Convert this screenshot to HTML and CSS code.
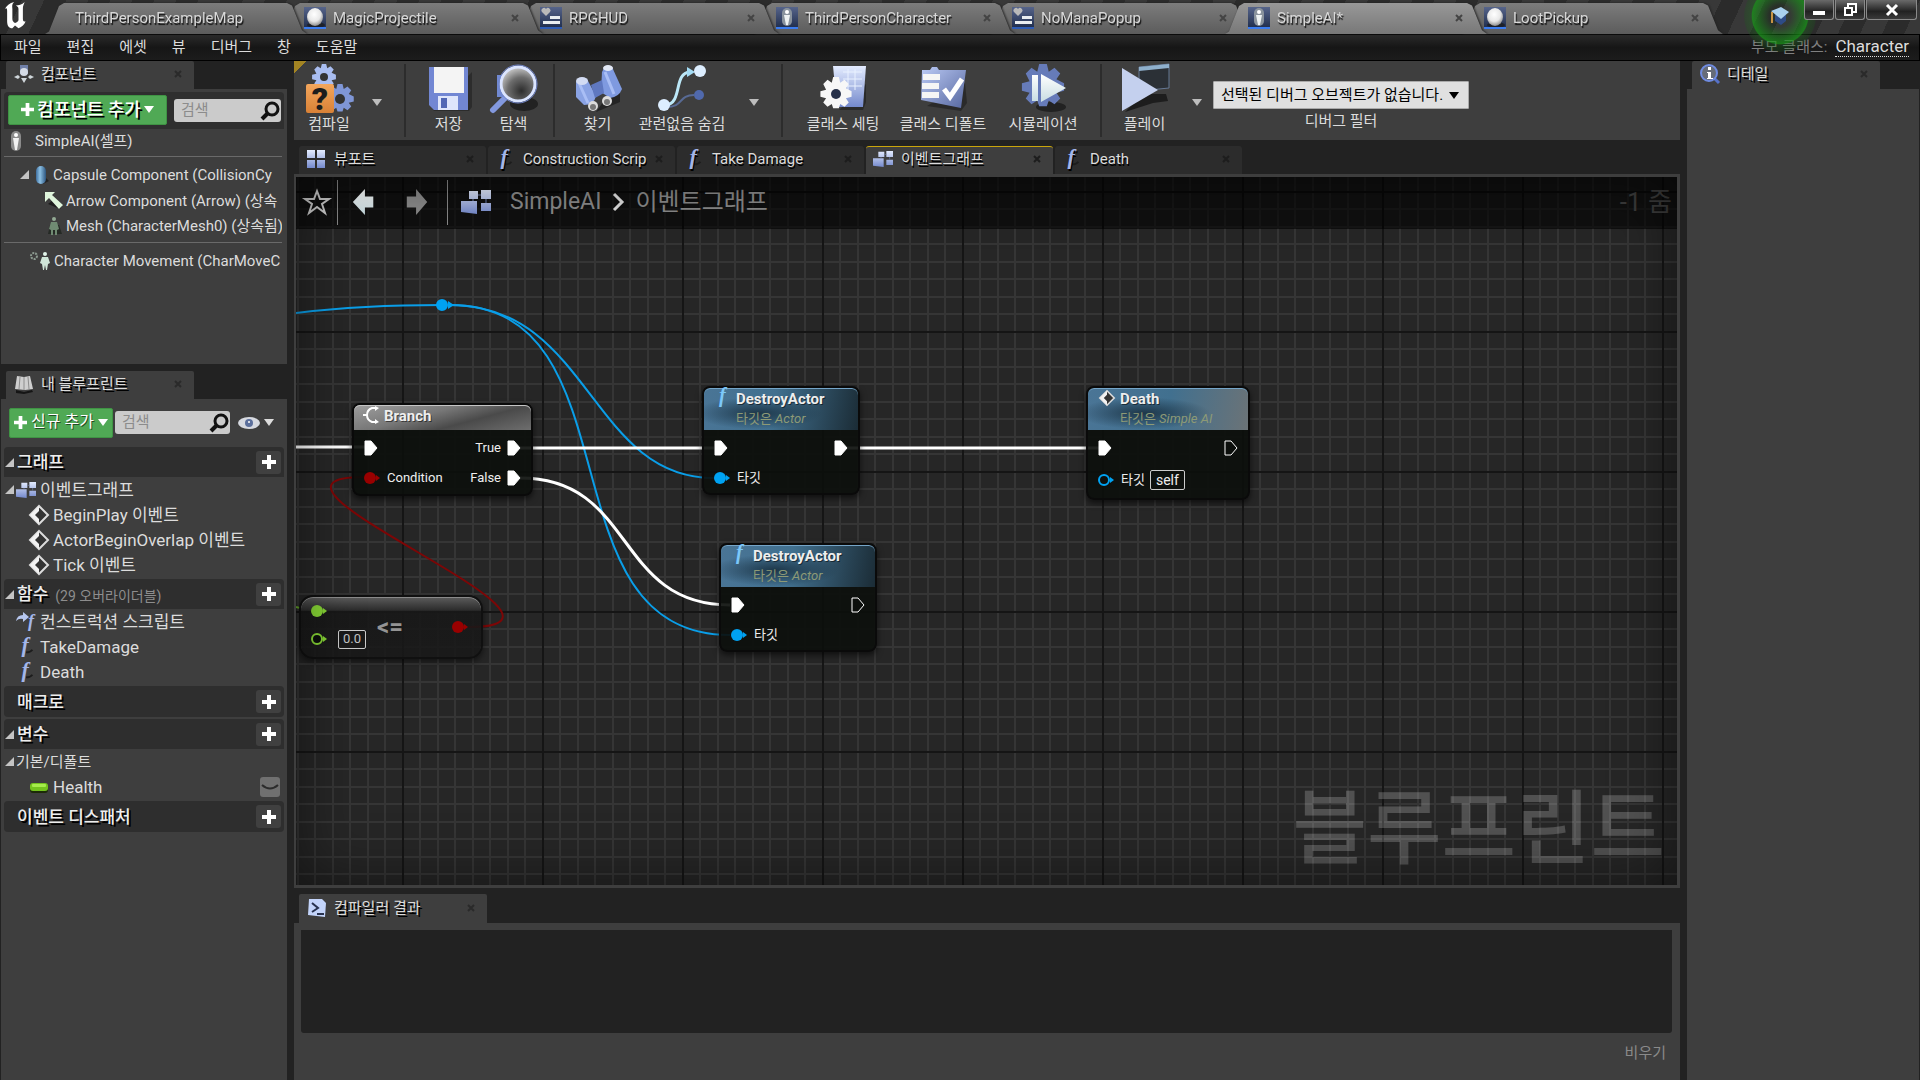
FILE: index.html
```html
<!DOCTYPE html>
<html lang="ko">
<head>
    <meta charset="UTF-8">
    <meta name="viewport" content="width=device-width, initial-scale=1.0">
    <title>SimpleAI</title>
    <link rel="stylesheet" href="styles.css">
</head>
<body>

<!-- shared icons -->
<svg class="sprite" aria-hidden="true">
    <defs>
        <linearGradient id="gBlue" x1="0" y1="0" x2="0" y2="1">
            <stop offset="0" stop-color="#e4ecff"/>
            <stop offset="1" stop-color="#7489cc"/>
        </linearGradient>
        <linearGradient id="gSteel" x1="0" y1="0" x2="1" y2="1">
            <stop offset="0" stop-color="#bccbf6"/>
            <stop offset="1" stop-color="#56679f"/>
        </linearGradient>
        <linearGradient id="gTile" x1="0" y1="0" x2="0" y2="1">
            <stop offset="0" stop-color="#56648a"/>
            <stop offset="1" stop-color="#1d2b4a"/>
        </linearGradient>
        <linearGradient id="gWhite" x1="0" y1="0" x2="0" y2="1">
            <stop offset="0" stop-color="#ffffff"/>
            <stop offset="1" stop-color="#c8dde2"/>
        </linearGradient>
        <linearGradient id="gOrange" x1="0" y1="0" x2="0" y2="1">
            <stop offset="0" stop-color="#f3a65c"/>
            <stop offset="1" stop-color="#d98136"/>
        </linearGradient>
        <linearGradient id="gCapsule" x1="0" y1="0" x2="1" y2="0">
            <stop offset="0" stop-color="#3f6f9f"/>
            <stop offset="0.4" stop-color="#8cc0e4"/>
            <stop offset="1" stop-color="#2d5680"/>
        </linearGradient>
        <radialGradient id="gSphere" cx="0.45" cy="0.35" r="0.65">
            <stop offset="0" stop-color="#ffffff"/>
            <stop offset="0.6" stop-color="#e8e8e8"/>
            <stop offset="1" stop-color="#8d8d8d"/>
        </radialGradient>
        <radialGradient id="gLens" cx="0.6" cy="0.7" r="0.8">
            <stop offset="0" stop-color="#2d2d2d"/>
            <stop offset="0.5" stop-color="#6d6d6d"/>
            <stop offset="1" stop-color="#e5e5e5"/>
        </radialGradient>
    </defs>

    <symbol id="i-sphere" viewBox="0 0 22 22">
        <rect width="22" height="22" fill="url(#gTile)"/>
        <ellipse cx="12" cy="18" rx="9" ry="3" fill="#1a1a1a" opacity="0.7"/>
        <ellipse cx="11" cy="10" rx="8" ry="9" fill="url(#gSphere)"/>
        <rect y="20" width="22" height="2" fill="#3c7df0"/>
    </symbol>
    <symbol id="i-widget" viewBox="0 0 22 22">
        <rect width="22" height="22" fill="url(#gTile)"/>
        <path d="M6 9 2 5a2 2 0 0 1 4-3 2 2 0 0 1 4 3z" fill="#b9b9b9"/>
        <path d="M10 9h10v3H10zM3 14h17v3H3z" fill="#e9edf0"/>
        <rect y="20" width="22" height="2" fill="#2e5cb4"/>
    </symbol>
    <symbol id="i-pawn" viewBox="0 0 22 22">
        <rect width="22" height="22" fill="url(#gTile)"/>
        <rect x="6" y="1" width="10" height="18" rx="5" fill="#8a939d"/>
        <circle cx="11" cy="5" r="2" fill="#fff"/>
        <path d="M8 8h6l-1 5-1 5h-2l-1-5z" fill="#eef2f2"/>
        <rect y="20" width="22" height="2" fill="#3c7df0"/>
    </symbol>
    <symbol id="i-pawn-s" viewBox="0 0 20 20">
        <rect x="5" y="0" width="10" height="20" rx="5" fill="#8b8b8b"/>
        <circle cx="10" cy="4" r="2" fill="#fff"/>
        <path d="M7 7h6l-1 6-1 6H9l-1-6z" fill="#f2f2f2"/>
    </symbol>
    <symbol id="i-func" viewBox="0 0 20 22">
        <path d="M10 17q5 0 7-3" stroke="#1c1c1c" stroke-width="2" fill="none"/>
        <text x="5" y="16" class="fn-glyph">f</text>
    </symbol>
    <symbol id="i-graph" viewBox="0 0 30 24">
        <path d="M8 1h9v8H8zM20 0h10v9H20zM20 13h10v8H20zM0 11h16v13l-16-2z" fill="url(#gBlue)"/>
        <path d="M17 5h3M25 9v4M12 9v2" stroke="#6d7dab" stroke-width="1"/>
    </symbol>
    <symbol id="i-view" viewBox="0 0 20 20">
        <path d="M1 1h8v8H1zM11 1h8v8h-8zM1 11h8v8H1zM11 11h8v8h-8z" fill="url(#gBlue)"/>
    </symbol>
    <symbol id="i-event" viewBox="0 0 20 20">
        <path d="M10 1 19 10 10 19 1 10z" fill="#333" stroke="#dcdcdc" stroke-width="2"/>
        <path d="M10 1v5l-4 4 4 4v5L1 10z" fill="#f2f2f2"/>
    </symbol>
    <symbol id="i-find" viewBox="0 0 20 20">
        <circle cx="12" cy="8" r="6" fill="none" stroke="#111" stroke-width="3"/>
        <path d="M8 12 2 18" stroke="#111" stroke-width="4"/>
    </symbol>
    <symbol id="i-plus" viewBox="0 0 14 14">
        <path d="M5 0h4v5h5v4H9v5H5V9H0V5h5z" fill="#fff"/>
    </symbol>
    <symbol id="i-down" viewBox="0 0 10 7">
        <path d="M0 0h10L5 7z" fill="currentColor"/>
    </symbol>
    <symbol id="i-open" viewBox="0 0 9 9">
        <path d="M9 0v9H0z" fill="#c4c4c4"/>
    </symbol>
    <symbol id="i-close" viewBox="0 0 8 8">
        <path d="M1 1l6 6M7 1 1 7" stroke="currentColor" stroke-width="2"/>
    </symbol>
    <symbol id="i-exec" viewBox="0 0 14 16">
        <path d="M1 1h6l6 7-6 7H1z" stroke="#fff" stroke-linejoin="round"/>
    </symbol>
    <symbol id="i-pin" viewBox="0 0 18 14">
        <path d="M13 4 17 7l-4 3z" fill="currentColor"/>
        <circle cx="7" cy="7" r="6" fill="currentColor"/>
    </symbol>
    <symbol id="i-pin-open" viewBox="0 0 18 14">
        <path d="M13 4 17 7l-4 3z" fill="currentColor"/>
        <circle cx="7" cy="7" r="5" fill="#0c0f0c" stroke="currentColor" stroke-width="2"/>
    </symbol>
    <symbol id="i-gear" viewBox="-12 -12 24 24">
        <path d="M-2-12h4l1 4 3-2 3 3-2 3 4 2v4l-4 1 2 3-3 3-3-2-1 3h-4l-1-3-3 2-3-3 2-3-4-1v-4l4-1-2-4 3-3 3 2z" fill="currentColor"/>
    </symbol>
</svg>

<div class="editor">
    <header class="titlebar">
        <svg class="logo" viewBox="0 0 26 32" role="img" aria-label="Unreal">
            <path d="M1 10C3 5 7 2 12 1c-3 3-2 5-2 8v11c0 3 1 4 3 5 1 0 3-1 4-3V9c0-2-1-3-3-4 3 0 7-1 10-4-1 3-2 4-2 8v11c0 3 1 4 3 3-1 4-5 7-8 8l-4-3-3 3C6 31 4 28 4 23V11c0-3-1-4-3-1z" fill="#fff"/>
        </svg>
        <nav class="doc-tabs">
            <div class="doc-tab z7"><a href="#" class="map">ThirdPersonExampleMap</a></div>
            <div class="doc-tab z6"><a href="#"><svg class="tile"><use href="#i-sphere"/></svg>MagicProjectile<svg class="x"><use href="#i-close"/></svg></a></div>
            <div class="doc-tab z5"><a href="#"><svg class="tile"><use href="#i-widget"/></svg>RPGHUD<svg class="x"><use href="#i-close"/></svg></a></div>
            <div class="doc-tab z4"><a href="#"><svg class="tile"><use href="#i-pawn"/></svg>ThirdPersonCharacter<svg class="x"><use href="#i-close"/></svg></a></div>
            <div class="doc-tab z3"><a href="#"><svg class="tile"><use href="#i-widget"/></svg>NoManaPopup<svg class="x"><use href="#i-close"/></svg></a></div>
            <div class="doc-tab z8 active"><a href="#"><svg class="tile"><use href="#i-pawn"/></svg>SimpleAI*<svg class="x"><use href="#i-close"/></svg></a></div>
            <div class="doc-tab z1"><a href="#"><svg class="tile"><use href="#i-sphere"/></svg>LootPickup<svg class="x"><use href="#i-close"/></svg></a></div>
        </nav>
        <button class="tutorial" aria-label="튜토리얼">
            <svg viewBox="0 0 20 20">
                <path d="M5 9v6l6 4 5-4V9z" fill="#2e4b86"/>
                <path d="M1 5 11 1l8 5-8 7z" fill="#a9d0ee"/>
                <path d="M2 6v11" stroke="#c79345" stroke-width="2"/>
            </svg>
        </button>
        <div class="window-buttons">
            <button aria-label="최소화"><svg viewBox="0 0 14 14"><path d="M1 8h12v4H1z" fill="#fff"/></svg></button>
            <button aria-label="이전 크기로"><svg viewBox="0 0 14 14"><path d="M5 4V1h8v8h-3" fill="none" stroke="#fff" stroke-width="2"/><path d="M2 5h7v7H2z" fill="none" stroke="#fff" stroke-width="2"/></svg></button>
            <button class="wide" aria-label="닫기"><svg viewBox="0 0 14 14"><path d="M2 2l10 10M12 2 2 12" stroke="#fff" stroke-width="3"/></svg></button>
        </div>
    </header>

    <div class="menubar">
        <a href="#">파일</a>
        <a href="#">편집</a>
        <a href="#">에셋</a>
        <a href="#">뷰</a>
        <a href="#">디버그</a>
        <a href="#">창</a>
        <a href="#">도움말</a>
        <span class="parent-label">부모 클래스:</span>
        <a href="#" class="parent-class">Character</a>
    </div>

    <main class="workspace">
        <aside class="left">
            <section class="panel components">
                <h2 class="panel-tab">
                    <svg viewBox="0 0 20 20"><path d="M6 1h8v9H6z" fill="#6f7fa8"/><circle cx="10" cy="8" r="4" fill="#d5dbe6"/><path d="M0 13l4-2 2 2-2 2zM20 13l-4-2-2 2 2 2zM7 14h6l-3 5z" fill="#cfd6da"/></svg>
                    컴포넌트
                    <svg class="x"><use href="#i-close"/></svg>
                </h2>
                <div class="panel-body">
                    <div class="add-bar">
                        <button class="green big"><svg><use href="#i-plus"/></svg>컴포넌트 추가<svg class="down"><use href="#i-down"/></svg></button>
                        <label class="search"><input type="text" placeholder="검색" aria-label="컴포넌트 검색"><svg><use href="#i-find"/></svg></label>
                    </div>
                    <ul class="tree comp-tree">
                        <li class="root"><svg class="ico"><use href="#i-pawn-s"/></svg>SimpleAI(셀프)</li>
                        <li class="l1"><svg class="open"><use href="#i-open"/></svg><svg class="ico" viewBox="0 0 20 20"><path d="M14 12l4 4-6 3z" fill="#222"/><rect x="5" y="1" width="10" height="18" rx="5" fill="url(#gCapsule)"/></svg>Capsule Component (CollisionCy</li>
                        <li class="l2"><svg class="ico" viewBox="0 0 20 20"><path d="M4 13l12 5 2-3-9-6z" fill="#1d1d1d"/><path d="M1 1h10L8 4l11 10-4 4L5 7 1 11z" fill="#dff5dc"/></svg>Arrow Component (Arrow) (상속</li>
                        <li class="l2"><svg class="ico" viewBox="0 0 20 20"><path d="M4 18h14l-3-9H6z" fill="#252a25"/><circle cx="10" cy="3" r="2" fill="#93aa94"/><path d="M7 6h6l2 7-2 1v5h-2v-5H9v5H7v-5l-2-1z" fill="#6f8a72"/></svg>Mesh (CharacterMesh0) (상속됨)</li>
                        <li class="move"><svg class="ico wide" viewBox="0 0 22 20"><circle cx="4" cy="5" r="3" fill="none" stroke="#8c9a90" stroke-width="2" stroke-dasharray="2 1"/><circle cx="15" cy="3" r="2" fill="#e2f5ea"/><path d="M12 6h6l2 6-2 1-1 6h-1l-1-5-1 5h-1l-1-6-2-1z" fill="#cfe6d8"/></svg>Character Movement (CharMoveC</li>
                    </ul>
                </div>
            </section>

            <section class="panel blueprint">
                <h2 class="panel-tab">
                    <svg viewBox="0 0 20 20"><path d="M2 16l8 2 8-2 1 2-9 2-8-1z" fill="#151515"/><path d="M3 2l7 1 6-1 3 13-8 1-10-1z" fill="#cfcfcf"/><path d="M10 3v13M6 3 5 15M14 3l1 12" stroke="#8d8d8d"/></svg>
                    내 블루프린트
                    <svg class="x"><use href="#i-close"/></svg>
                </h2>
                <div class="panel-body">
                    <div class="new-bar">
                        <button class="green"><svg><use href="#i-plus"/></svg>신규 추가<svg class="down"><use href="#i-down"/></svg></button>
                        <label class="search"><input type="text" placeholder="검색" aria-label="블루프린트 검색"><svg><use href="#i-find"/></svg></label>
                        <button class="eye" aria-label="보기 옵션">
                            <svg viewBox="0 0 22 14"><ellipse cx="11" cy="7" rx="11" ry="6" fill="#d6d9e0"/><circle cx="11" cy="7" r="4" fill="#5b6f9c"/><circle cx="11" cy="6" r="1" fill="#fff"/></svg>
                            <svg class="down"><use href="#i-down"/></svg>
                        </button>
                    </div>
                    <div class="category">
                        <h3><svg class="open"><use href="#i-open"/></svg>그래프<button aria-label="그래프 추가"><svg><use href="#i-plus"/></svg></button></h3>
                        <ul class="tree">
                            <li><svg class="open"><use href="#i-open"/></svg><svg class="ico"><use href="#i-graph"/></svg>이벤트그래프</li>
                            <li class="sub"><svg class="ico"><use href="#i-event"/></svg>BeginPlay 이벤트</li>
                            <li class="sub"><svg class="ico"><use href="#i-event"/></svg>ActorBeginOverlap 이벤트</li>
                            <li class="sub"><svg class="ico"><use href="#i-event"/></svg>Tick 이벤트</li>
                        </ul>
                    </div>
                    <div class="category">
                        <h3><svg class="open"><use href="#i-open"/></svg>함수<small>(29 오버라이더블)</small><button aria-label="함수 추가"><svg><use href="#i-plus"/></svg></button></h3>
                        <ul class="tree">
                            <li class="leaf"><svg class="ico" viewBox="0 0 20 20"><path d="M0 9q1-6 7-6V0l6 5-6 5V7Q3 6 0 9z" fill="#b6c6ee"/><text x="12" y="15" class="fn-glyph small">f</text></svg>컨스트럭션 스크립트</li>
                            <li class="leaf"><svg class="ico"><use href="#i-func"/></svg>TakeDamage</li>
                            <li class="leaf"><svg class="ico"><use href="#i-func"/></svg>Death</li>
                        </ul>
                    </div>
                    <div class="category">
                        <h3 class="closed">매크로<button aria-label="매크로 추가"><svg><use href="#i-plus"/></svg></button></h3>
                    </div>
                    <div class="category">
                        <h3><svg class="open"><use href="#i-open"/></svg>변수<button aria-label="변수 추가"><svg><use href="#i-plus"/></svg></button></h3>
                        <ul class="tree">
                            <li class="group"><svg class="open"><use href="#i-open"/></svg>기본/디폴트</li>
                            <li class="sub"><svg class="ico" viewBox="0 0 20 20"><rect x="1" y="7" width="18" height="9" rx="3" fill="#1c2a08"/><rect x="1" y="6" width="18" height="8" rx="3" fill="#74c41e"/><rect x="3" y="7" width="14" height="3" rx="1" fill="#a6ec4c"/></svg>Health<button class="closed-eye" aria-label="공개 전환"><svg viewBox="0 0 20 20"><path d="M2 8q8 7 16 0" fill="none" stroke="#2c2c2c" stroke-width="2"/></svg></button></li>
                        </ul>
                    </div>
                    <div class="category">
                        <h3 class="closed">이벤트 디스패처<button aria-label="디스패처 추가"><svg><use href="#i-plus"/></svg></button></h3>
                    </div>
                </div>
            </section>
        </aside>

        <div class="center">
            <div class="toolbar">
                <button class="tool compile">
                    <svg viewBox="0 0 48 50">
                        <g color="#a9bdf0"><use href="#i-gear" x="6" y="0" width="26" height="26"/></g>
                        <g color="#7f96d6"><use href="#i-gear" x="20" y="20" width="30" height="30"/></g>
                        <circle cx="19" cy="13" r="4" fill="#333"/><circle cx="35" cy="35" r="5" fill="#333"/>
                        <rect x="1" y="20" width="28" height="29" rx="2" fill="url(#gOrange)"/>
                        <text x="15" y="46" class="mark">?</text>
                    </svg>
                    컴파일
                </button>
                <button class="more" aria-label="컴파일 옵션"><svg><use href="#i-down"/></svg></button>
                <span class="sep"></span>
                <button class="tool">
                    <svg viewBox="0 0 48 50">
                        <path d="M8 47h36l3-4V8z" fill="#222" opacity="0.6"/>
                        <path d="M4 3h39v43H9l-5-5z" fill="#7287d3"/>
                        <path d="M9 3h30v26H9z" fill="#f4f4f4"/>
                        <path d="M13 32h20v14H13z" fill="#dfe6fb"/>
                        <path d="M16 34h6v10h-6z" fill="#5267b4"/>
                    </svg>
                    저장
                </button>
                <button class="tool">
                    <svg viewBox="0 0 48 50">
                        <ellipse cx="34" cy="40" rx="14" ry="7" fill="#222"/>
                        <path d="M16 33 3 46" stroke="#8399df" stroke-width="6" stroke-linecap="round"/>
                        <path d="M7 11h10v22H7z" fill="#7189d2"/>
                        <circle cx="28" cy="20" r="17" fill="url(#gLens)" stroke="#dbe5ff" stroke-width="3"/>
                        <circle cx="28" cy="20" r="19" fill="none" stroke="#7388ce"/>
                    </svg>
                    탐색
                </button>
                <span class="sep"></span>
                <button class="tool">
                    <svg viewBox="0 0 48 50">
                        <path d="M22 48l24-10v-10l-14 6z" fill="#242424"/>
                        <path d="M28 8Q31 0 38 3l10 22q-3 8-12 9l-9-6z" fill="#7f9ae0"/>
                        <path d="M2 18q4-6 11-3l9 17q-2 9-12 9l-8-8z" fill="#8aa3e4"/>
                        <path d="M17 21l11-5 2 13-9 5z" fill="#5f78c0"/>
                        <path d="M31 8l9 22M5 19l9 20" stroke="#a9bef5" stroke-width="3"/>
                        <ellipse cx="34" cy="4" rx="5" ry="3" fill="#e3e9f6"/>
                        <ellipse cx="8" cy="17" rx="6" ry="4" fill="#d3dcf3"/>
                        <circle cx="19" cy="42" r="5" fill="#dcdcdc"/><circle cx="33" cy="37" r="5" fill="#dcdcdc"/>
                        <circle cx="19" cy="43" r="3" fill="#777"/><circle cx="33" cy="38" r="3" fill="#777"/>
                    </svg>
                    찾기
                </button>
                <button class="tool long">
                    <svg viewBox="0 0 48 50">
                        <path d="M8 43c18 0 12-12 28-12" fill="none" stroke="#586a94" stroke-width="2"/>
                        <circle cx="41" cy="31" r="5" fill="#5069ad"/>
                        <path d="M8 41c17-2 7-32 24-33" fill="none" stroke="#bce8f8" stroke-width="3"/>
                        <path d="M29 3l8 5-8 5z" fill="#a4dcf5"/>
                        <circle cx="42" cy="7" r="6" fill="#ddeeff"/><circle cx="6" cy="41" r="6" fill="#ddeeff"/>
                    </svg>
                    관련없음 숨김
                </button>
                <button class="more" aria-label="숨김 옵션"><svg><use href="#i-down"/></svg></button>
                <span class="sep"></span>
                <button class="tool wide">
                    <svg viewBox="0 0 48 50">
                        <path d="M20 46h24l3-8V20z" fill="#222" opacity="0.7"/>
                        <path d="M14 2h33l-3 41H18z" fill="url(#gBlue)"/>
                        <path d="M24 8h19M24 15h19M24 22h19M29 5v21M36 5v21" stroke="#e9f1ff"/>
                        <g color="#f7f7f7"><use href="#i-gear" x="0" y="13" width="34" height="34"/></g>
                        <circle cx="17" cy="30" r="5" fill="#27314a"/>
                    </svg>
                    클래스 세팅
                </button>
                <button class="tool wide">
                    <svg viewBox="0 0 48 50">
                        <path d="M8 42l34 5 6-8-2-20z" fill="#222" opacity="0.7"/>
                        <path d="M3 6h8l2-3h5l2 3h27l-5 38L2 36z" fill="url(#gSteel)"/>
                        <path d="M4 10h17v6H4zM3 19h17v6H3zM3 28h17v6H3z" fill="#f5f5f5"/>
                        <path d="M25 25l6 8 12-18" fill="none" stroke="#fff" stroke-width="5"/>
                    </svg>
                    클래스 디폴트
                </button>
                <button class="tool wide">
                    <svg viewBox="0 0 48 50">
                        <ellipse cx="32" cy="43" rx="15" ry="5" fill="#222"/>
                        <g color="#667bb9"><use href="#i-gear" x="0" y="0" width="48" height="46"/></g>
                        <path d="M13 11h6v26h-6zM22 10l25 14-25 14z" fill="url(#gWhite)"/>
                    </svg>
                    시뮬레이션
                </button>
                <span class="sep"></span>
                <button class="tool">
                    <svg viewBox="0 0 48 50">
                        <path d="M4 48l28-9 15-2-2-7H22z" fill="#1d1d1d"/>
                        <path d="M18 3 48 0v24l-30 3z" fill="#2b3036" stroke="#657894"/>
                        <path d="M18 3 48 0v4L18 7z" fill="#8fb0cc"/>
                        <path d="M1 4l36 22L1 47z" fill="#c4d0ee"/>
                    </svg>
                    플레이
                </button>
                <button class="more" aria-label="플레이 옵션"><svg><use href="#i-down"/></svg></button>
                <div class="debug">
                    <span class="select-wrap">
                        <select id="debugObject">
                            <option>선택된 디버그 오브젝트가 없습니다.</option>
                        </select>
                        <svg><use href="#i-down"/></svg>
                    </span>
                    <label for="debugObject">디버그 필터</label>
                </div>
            </div>

            <nav class="graph-tabs">
                <a href="#"><svg><use href="#i-view"/></svg><span>뷰포트</span><svg class="x"><use href="#i-close"/></svg></a>
                <a href="#"><svg><use href="#i-func"/></svg><span>Construction Scrip</span><svg class="x"><use href="#i-close"/></svg></a>
                <a href="#"><svg><use href="#i-func"/></svg><span>Take Damage</span><svg class="x"><use href="#i-close"/></svg></a>
                <a href="#" class="active"><svg><use href="#i-graph"/></svg><span>이벤트그래프</span><svg class="x"><use href="#i-close"/></svg></a>
                <a href="#"><svg><use href="#i-func"/></svg><span>Death</span><svg class="x"><use href="#i-close"/></svg></a>
            </nav>

            <section class="graph">
                <svg class="grid">
                    <defs>
                        <pattern id="cells" x="106" y="14" width="140" height="140" patternUnits="userSpaceOnUse">
                            <path d="M18 0v140M36 0v140M53 0v140M71 0v140M88 0v140M106 0v140M123 0v140M0 18h140M0 36h140M0 53h140M0 71h140M0 88h140M0 106h140M0 123h140" stroke="#353535" stroke-width="2"/>
                            <path d="M1 0v140M0 1h140" stroke="#151515" stroke-width="2"/>
                        </pattern>
                    </defs>
                    <rect width="100%" height="100%" fill="url(#cells)"/>
                </svg>
                <div class="watermark">블루프린트</div>

                <!-- wires, in canvas coordinates -->
                <svg class="wires">
                    <g stroke="#0a9ee8" stroke-width="2">
                        <path d="M0 136C50 130 90 128 146 128"/>
                        <path d="M154 128C294 128 294 301 418 301"/>
                        <path d="M154 128C344 128 244 458 434 458"/>
                    </g>
                    <path d="M146 122a6 6 0 1 1 0 12 6 6 0 0 1 0-12zM152 124l6 4-6 4z" fill="#00a2f2"/>
                    <g stroke="#fff" stroke-width="3">
                        <path d="M0 270h70M224 271h194M550 271h256"/>
                        <path d="M224 301C340 301 318 428 434 428"/>
                    </g>
                    <path d="M172 450C324 450-80 300 68 300" stroke="#7d0606" stroke-width="2"/>
                    <path d="M0 430q8 3 16 3" stroke="#6db52c" stroke-width="2"/>
                </svg>

                <article class="node branch">
                    <header>
                        <svg viewBox="0 0 16 18"><path d="M0 9h4M14 2H9Q4 4 4 9t5 7h5" fill="none" stroke="#fff" stroke-width="2"/><path d="M12 0l4 2-4 3zM12 13l4 3-4 2z" fill="#fff"/></svg>
                        <h4>Branch</h4>
                    </header>
                    <div class="pins"><svg class="exec on"><use href="#i-exec"/></svg><span class="out">True</span><svg class="exec on"><use href="#i-exec"/></svg></div>
                    <div class="pins"><svg class="pin red"><use href="#i-pin"/></svg><span>Condition</span><span class="out">False</span><svg class="exec on"><use href="#i-exec"/></svg></div>
                </article>

                <article class="node compare">
                    <div class="col">
                        <svg class="pin green-pin"><use href="#i-pin"/></svg>
                        <div class="row"><svg class="pin green-pin"><use href="#i-pin-open"/></svg><input type="text" value="0.0" aria-label="비교 값"></div>
                    </div>
                    <strong>&lt;=</strong>
                    <svg class="pin red"><use href="#i-pin"/></svg>
                </article>

                <article class="node call destroy-a">
                    <header>
                        <svg class="f" viewBox="0 0 16 18"><text x="4" y="13" class="fn-glyph bright">f</text></svg>
                        <div><h4>DestroyActor</h4><p>타깃은 <i>Actor</i></p></div>
                    </header>
                    <div class="pins"><svg class="exec on"><use href="#i-exec"/></svg><svg class="exec on out"><use href="#i-exec"/></svg></div>
                    <div class="pins"><svg class="pin blue"><use href="#i-pin"/></svg><span>타깃</span></div>
                </article>

                <article class="node call destroy-b">
                    <header>
                        <svg class="f" viewBox="0 0 16 18"><text x="4" y="13" class="fn-glyph bright">f</text></svg>
                        <div><h4>DestroyActor</h4><p>타깃은 <i>Actor</i></p></div>
                    </header>
                    <div class="pins"><svg class="exec on"><use href="#i-exec"/></svg><svg class="exec out"><use href="#i-exec"/></svg></div>
                    <div class="pins"><svg class="pin blue"><use href="#i-pin"/></svg><span>타깃</span></div>
                </article>

                <article class="node call death">
                    <header>
                        <svg><use href="#i-event"/></svg>
                        <div><h4>Death</h4><p>타깃은 <i>Simple AI</i></p></div>
                    </header>
                    <div class="pins"><svg class="exec on"><use href="#i-exec"/></svg><svg class="exec out"><use href="#i-exec"/></svg></div>
                    <div class="pins"><svg class="pin blue"><use href="#i-pin-open"/></svg><span>타깃</span><span class="self">self</span></div>
                </article>

                <div class="crumbs">
                    <button aria-label="즐겨찾기"><svg viewBox="0 0 26 26"><path d="M13 2l3 8h9l-7 5 3 9-8-6-8 6 3-9-7-5h9z" fill="none" stroke="#d0d0d0" stroke-width="2"/></svg></button>
                    <span class="rule"></span>
                    <button class="back" aria-label="뒤로"><svg viewBox="0 0 24 28"><path d="M0 14 13 0v8h9v12h-9v8z" fill="url(#gWhite)"/></svg></button>
                    <button class="fwd" aria-label="앞으로"><svg viewBox="0 0 24 28"><path d="M23 14 11 0v8H1v12h10v8z" fill="#8a8a8a"/></svg></button>
                    <span class="rule"></span>
                    <svg class="kind"><use href="#i-graph"/></svg>
                    <a href="#" class="asset">SimpleAI</a>
                    <svg class="chev" viewBox="0 0 12 20"><path d="M2 2l8 8-8 8" fill="none" stroke="#e0e0e0" stroke-width="3"/></svg>
                    <a href="#">이벤트그래프</a>
                    <span class="zoom">-1 줌</span>
                </div>
                <div class="vignette"></div>
            </section>

            <section class="panel results">
                <h2 class="panel-tab">
                    <svg viewBox="0 0 20 20"><path d="M2 1h13l4 4-1 14-17-2z" fill="#c3d4fa"/><path d="M5 5l6 5-6 4" fill="none" stroke="#28324f" stroke-width="2"/><path d="M10 16h7" stroke="#28324f" stroke-width="2"/></svg>
                    컴파일러 결과
                    <svg class="x"><use href="#i-close"/></svg>
                </h2>
                <div class="panel-body">
                    <div class="log"></div>
                    <button class="clear">비우기</button>
                </div>
            </section>
        </div>

        <aside class="panel details">
            <h2 class="panel-tab">
                <svg viewBox="0 0 20 20"><path d="M14 14l5 5" stroke="#5671c8" stroke-width="3"/><circle cx="9" cy="9" r="8" fill="#666c78" stroke="#6f8be0" stroke-width="2"/><path d="M8 3h3v3H8zM7 8h4v6h2v1H7v-1h1v-5H7z" fill="#fff"/></svg>
                디테일
                <svg class="x"><use href="#i-close"/></svg>
            </h2>
            <div class="panel-body"></div>
        </aside>
    </main>
</div>

</body>
</html>
```
FILE: styles.css
```css
* {
    box-sizing: border-box;
}
body {
    margin: 0;
    background: #222;
    color: #dcdcdc;
    font-family: Roboto, "Noto Sans CJK KR", sans-serif;
    font-size: 15px;
    line-height: 20px;
}
h2, h3, h4, p, ul {
    margin: 0;
    padding: 0;
    font-weight: normal;
    font-size: inherit;
}
ul {
    list-style: none;
}
a {
    color: inherit;
    text-decoration: none;
}
button, input, select {
    font: inherit;
    color: inherit;
    border: none;
    padding: 0;
    margin: 0;
    background: none;
}
svg {
    display: block;
    flex: none;
}
svg, symbol {
    overflow: visible;
}
.sprite {
    position: absolute;
    width: 0;
    height: 0;
}
.fn-glyph {
    font: italic bold 24px "Liberation Serif", serif;
    fill: #a3b6ea;
}
.fn-glyph.small {
    font-size: 18px;
}
.fn-glyph.bright {
    font-size: 20px;
    fill: #7cc8fa;
}
.mark {
    font-size: 32px;
    font-weight: 900;
    fill: #1c1c1c;
    text-anchor: middle;
}
.x {
    width: 8px;
    height: 8px;
    margin-left: auto;
    color: #2a2a2a;
}
.down {
    width: 10px;
    height: 7px;
}
.editor {
    display: flex;
    flex-direction: column;
    min-height: 100vh;
}

/* title bar */
.titlebar {
    position: relative;
    display: flex;
    height: 34px;
    background: repeating-linear-gradient(115deg, #2b2b2b 0 20px, #383838 20px 40px);
}
.logo {
    width: 26px;
    height: 28px;
    margin: 1px 17px 0 2px;
}
.doc-tabs {
    display: flex;
    flex: 1;
    min-width: 0;
}
.doc-tab {
    position: relative;
    flex: 0 1 262px;
    min-width: 0;
    margin-right: -26px;
    padding-top: 3px;
    filter: drop-shadow(1px 0 1px #222);
}
.doc-tab a {
    display: flex;
    align-items: center;
    height: 31px;
    padding: 0 24px 2px 23px;
    color: #d8d8d8;
    text-shadow: 1px 2px 1px #111;
    white-space: nowrap;
    background: linear-gradient(#7c7c7c, #5c5c5c);
    clip-path: polygon(0 100%, 4px 92%, 14px 10%, 19px 0, 242px 0, 247px 8%, 257px 88%, 262px 100%);
}
.doc-tab.active a {
    background: linear-gradient(#989898, #787878);
}
.doc-tab a.map {
    padding-left: 30px;
}
.doc-tab .x {
    color: #444;
}
.tile {
    width: 22px;
    height: 22px;
    margin-right: 7px;
}
.z8 { z-index: 8; }
.z7 { z-index: 7; }
.z6 { z-index: 6; }
.z5 { z-index: 5; }
.z4 { z-index: 4; }
.z3 { z-index: 3; }
.z1 { z-index: 1; }
.tutorial {
    position: absolute;
    top: -20px;
    right: 104px;
    z-index: 10;
    width: 72px;
    height: 72px;
    border-radius: 50%;
    background: radial-gradient(circle closest-side, rgba(20, 90, 20, 0.1) 30%, rgba(24, 150, 24, 0.75) 77%, rgba(28, 110, 28, 0.35) 80%, rgba(28, 90, 28, 0.25) 100%);
}
.tutorial svg {
    width: 20px;
    height: 20px;
    margin: 0 auto;
}
.window-buttons {
    position: relative;
    z-index: 11;
    display: flex;
    gap: 1px;
    margin-right: 3px;
}
.window-buttons button {
    width: 30px;
    height: 20px;
    border: 1px solid #8a8a8a;
    border-top: none;
    border-radius: 0 0 3px 3px;
    background: linear-gradient(#6a6a6a, #222 60%, #3a3a3a);
}
.window-buttons .wide {
    width: 51px;
}
.window-buttons svg {
    width: 14px;
    height: 14px;
    margin: 0 auto;
}

/* menu */
.menubar {
    display: flex;
    align-items: center;
    gap: 25px;
    height: 27px;
    padding: 0 10px 2px 13px;
    border: 1px solid #000;
    background: linear-gradient(#2a2a2a, #161616 50%, #1c1c1c);
}
.parent-label {
    margin-left: auto;
    color: #808080;
}
.parent-class {
    margin-left: -17px;
    font-size: 17px;
    border-bottom: 1px dotted #ddd;
}

/* panels */
.workspace {
    display: grid;
    grid-template-columns: 286px minmax(0, 1fr) 232px;
    gap: 7px;
    flex: 1;
    padding: 0 1px;
}
.left, .center {
    display: flex;
    flex-direction: column;
}
.left {
    gap: 7px;
}
.panel {
    display: flex;
    flex-direction: column;
}
.panel-tab {
    display: flex;
    align-items: center;
    gap: 7px;
    width: 188px;
    height: 28px;
    margin-left: 5px;
    padding: 0 12px 2px 8px;
    border-radius: 2px 2px 0 0;
    background: #3e3e3e;
    text-shadow: 2px 2px 0 #000;
}
.panel-tab svg:first-child {
    width: 20px;
    height: 20px;
}
.panel-body {
    flex: 1;
    padding: 3px;
    background: #3e3e3e;
}
.components {
    flex: none;
    height: 303px;
}
.blueprint {
    flex: 1;
}
.add-bar, .new-bar {
    display: flex;
    align-items: center;
}
.add-bar {
    gap: 7px;
    height: 37px;
    padding: 0 3px 1px 4px;
    background: #2f2f2f;
    border-radius: 4px 4px 0 0;
}
.green {
    display: flex;
    align-items: center;
    justify-content: center;
    gap: 4px;
    width: 104px;
    height: 30px;
    padding-bottom: 1px;
    border: 1px solid #3f9344;
    border-radius: 2px;
    background: #50a955;
    color: #fff;
    font-size: 16px;
    white-space: nowrap;
    text-shadow: 1px 1px 0 #234d25;
}
.green svg {
    width: 13px;
    height: 13px;
}
.green .down {
    width: 10px;
    height: 7px;
}
.green.big {
    width: 159px;
    gap: 3px;
    font-size: 18px;
    font-weight: 500;
    text-shadow: 2px 2px 0 #000;
}
.search {
    position: relative;
    flex: 1;
    min-width: 0;
    height: 23px;
}
.search input {
    width: 100%;
    height: 23px;
    padding: 0 24px 1px 7px;
    border-radius: 3px;
    background: #cbcbcb;
    color: #222;
    outline: none;
}
.search input::placeholder {
    color: #8c8c8c;
    opacity: 1;
}
.search svg {
    position: absolute;
    top: 2px;
    right: 1px;
    width: 20px;
    height: 20px;
}
.tree li {
    display: flex;
    align-items: center;
    height: 25px;
    white-space: nowrap;
    overflow: hidden;
}
.ico {
    width: 20px;
    height: 20px;
}
.open {
    width: 9px;
    height: 9px;
}
.comp-tree {
    padding-right: 2px;
}
.comp-tree .root {
    height: 28px;
    padding: 0 0 3px 2px;
    border-bottom: 1px solid #6a6a6a;
    gap: 9px;
}
.comp-tree .l1 {
    height: 31px;
    padding: 4px 0 0 16px;
    gap: 2px;
}
.comp-tree .l2 {
    padding-left: 40px;
    gap: 2px;
}
.comp-tree .move {
    height: 36px;
    margin-top: 4px;
    padding-left: 26px;
    border-top: 1px solid #6a6a6a;
    gap: 2px;
}
.ico.wide {
    width: 22px;
}

/* my blueprint */
.new-bar {
    gap: 2px;
    height: 45px;
    padding: 0 10px 4px 5px;
}
.eye {
    display: flex;
    align-items: center;
    gap: 4px;
    margin-left: 6px;
}
.eye svg:first-child {
    width: 22px;
    height: 14px;
}
.category {
    padding-bottom: 2px;
    font-size: 17px;
}
.category h3 {
    display: flex;
    align-items: center;
    gap: 3px;
    height: 30px;
    padding: 0 3px 0 1px;
    border-radius: 4px 4px 0 0;
    background: #2e2e2e;
    color: #eee;
    font-weight: 500;
    text-shadow: 2px 2px 0 #000;
}
.category h3.closed {
    height: 31px;
    padding-left: 13px;
    border-radius: 4px;
}
.category small {
    margin: 4px 0 0 4px;
    color: #8d8d8d;
    font-size: 14px;
    font-weight: normal;
    text-shadow: none;
}
.category h3 button {
    display: flex;
    align-items: center;
    justify-content: center;
    width: 25px;
    height: 23px;
    margin-left: auto;
    border-radius: 3px;
    background: #404040;
}
.category h3 button svg {
    width: 14px;
    height: 14px;
}
.category li {
    gap: 4px;
    padding-left: 1px;
}
.category li .open {
    margin-right: -2px;
}
.category li.sub {
    padding: 0 4px 0 25px;
}
.category li.leaf {
    padding-left: 12px;
}
.category li.group {
    gap: 4px;
    font-size: 15px;
}
.closed-eye {
    width: 20px;
    height: 20px;
    margin-left: auto;
    border-radius: 3px;
    background: #707070;
}

/* toolbar */
.toolbar {
    display: flex;
    height: 79px;
    padding: 3px 0 0 7px;
    background: linear-gradient(135deg, #a38423 0 9px, #3e3e3e 9px);
    text-shadow: 1px 1px 0 #000;
}
.tool {
    display: flex;
    flex-direction: column;
    align-items: center;
    width: 65px;
    white-space: nowrap;
}
.tool svg {
    width: 48px;
    height: 50px;
}
.tool.wide {
    width: 100px;
}
.tool.long {
    width: 104px;
}
.tool.compile {
    width: 56px;
}
.more {
    width: 40px;
    color: #bdbdbd;
}
.more svg {
    width: 10px;
    height: 7px;
    margin: 0 auto;
}
.sep {
    width: 2px;
    height: 73px;
    margin: 0 10px 0 7px;
    background: #2c2c2c;
}
.debug {
    display: flex;
    flex-direction: column;
    align-items: center;
    margin-left: -4px;
    padding-top: 17px;
    text-shadow: none;
}
.select-wrap {
    position: relative;
    margin-bottom: 2px;
}
.select-wrap select {
    appearance: none;
    width: 256px;
    height: 28px;
    padding: 0 24px 0 7px;
    border: 1px solid #aaa;
    border-radius: 1px;
    background: #e0e0e0;
    color: #000;
}
.select-wrap svg {
    position: absolute;
    top: 11px;
    right: 10px;
    width: 10px;
    height: 7px;
    color: #000;
}
.graph-tabs {
    display: flex;
    gap: 2px;
    margin-top: 6px;
    padding-left: 5px;
}
.graph-tabs a {
    display: flex;
    align-items: center;
    flex: 0 1 187px;
    min-width: 0;
    height: 28px;
    gap: 8px;
    padding: 0 12px 3px 7px;
    border-top: 1px solid transparent;
    border-radius: 3px 3px 0 0;
    background: #2c2c2c;
    white-space: nowrap;
    text-shadow: 1px 2px 0 #000;
}
.graph-tabs a.active {
    border-top-color: #c9a50c;
    background: #3e3e3e;
}
.graph-tabs svg:first-child {
    width: 20px;
    height: 20px;
}
.graph-tabs .x {
    margin-left: auto;
    color: #1d1d1d;
}

/* graph canvas */
.graph {
    position: relative;
    flex: 1;
    min-height: 400px;
    border: 3px solid #3e3e3e;
    border-left-width: 2px;
    background: #262626;
    overflow: hidden;
}
.grid, .wires, .vignette {
    position: absolute;
    top: 0;
    left: 0;
    width: 100%;
    height: 100%;
}
.wires {
    fill: none;
}
.vignette {
    box-shadow: inset 0 0 60px rgba(0, 0, 0, 0.5);
    pointer-events: none;
}
.watermark {
    position: absolute;
    right: 12px;
    bottom: 5px;
    font-size: 81px;
    font-weight: 500;
    line-height: 100px;
    color: rgba(255, 255, 255, 0.2);
}
.crumbs {
    position: absolute;
    top: 0;
    left: 0;
    right: 0;
    display: flex;
    align-items: center;
    height: 52px;
    padding: 0 5px 2px 8px;
    background: rgba(0, 0, 0, 0.6);
    color: #8a8a8a;
    font-size: 24px;
    line-height: 32px;
}
.crumbs button svg {
    width: 26px;
    height: 26px;
}
.crumbs .rule {
    width: 1px;
    height: 45px;
    margin-left: 7px;
    background: #888;
}
.crumbs .back {
    margin-left: 13px;
}
.crumbs .fwd {
    margin: 0 10px 0 27px;
}
.crumbs .kind {
    width: 30px;
    height: 24px;
    margin: 0 19px 0 13px;
}
.crumbs .asset {
    font-size: 23px;
}
.crumbs .chev {
    width: 12px;
    height: 20px;
    margin: 0 11px;
}
.crumbs .zoom {
    margin-left: auto;
    color: #3c3c3c;
    font-size: 26px;
}
.node {
    position: absolute;
    border: 2px solid #0a0a0a;
    border-radius: 8px;
    background: rgba(12, 15, 12, 0.92);
    box-shadow: 0 3px 6px rgba(0, 0, 0, 0.6);
    color: #eee;
    font-size: 13px;
}
.node header {
    display: flex;
    gap: 5px;
    padding: 1px 9px 0;
    border-radius: 6px 6px 0 0;
}
.node h4 {
    font-size: 15px;
    font-weight: bold;
    text-shadow: 1px 1px 0 rgba(0, 0, 0, 0.5);
}
.node header p {
    color: #8d9a76;
}
.node header svg {
    width: 16px;
    height: 18px;
}
.branch {
    left: 56px;
    top: 226px;
    width: 181px;
    height: 93px;
}
.branch header {
    height: 25px;
    background: linear-gradient(165deg, #a0a0a0, #777 40%, #4a4a4a 65%, #6e6e6e);
    box-shadow: inset 0 1px 0 #c5c5c5;
}
.pins {
    display: flex;
    align-items: center;
    height: 30px;
    padding: 0 10px;
}
.branch header + .pins, .call header + .pins {
    margin-top: 3px;
}
.pins .out {
    margin-left: auto;
}
.pins .out + .exec {
    margin-left: 6px;
}
.exec {
    width: 14px;
    height: 16px;
    fill: #0c0f0c;
}
.exec.on {
    fill: #fff;
}
.pin {
    width: 18px;
    height: 14px;
}
.pins .pin {
    margin: 0 6px 0 -1px;
}
.red { color: #900; }
.blue { color: #00a2f2; }
.green-pin { color: #86d435; }
.compare {
    left: 3px;
    top: 418px;
    display: flex;
    align-items: center;
    width: 184px;
    height: 64px;
    padding: 0 12px 0 9px;
    border-color: #101010;
    border-radius: 14px;
    background: linear-gradient(#5c5c5c, #2c2c2c 22%, rgba(24, 24, 24, 0.92) 24%, rgba(24, 24, 24, 0.85));
    box-shadow: inset 0 1px 0 #8a8a8a, 0 3px 6px rgba(0, 0, 0, 0.5);
}
.compare .col {
    display: flex;
    flex-direction: column;
    gap: 12px;
    padding-bottom: 2px;
}
.compare .row {
    display: flex;
    align-items: center;
    gap: 10px;
}
.compare input, .self {
    border: 1px solid #ccc;
    border-radius: 2px;
    text-align: center;
}
.compare input {
    width: 28px;
    height: 19px;
    color: #c4c4c4;
}
.compare strong {
    margin: 0 auto 0 11px;
    color: #949494;
    font-size: 24px;
}
.call {
    width: 158px;
    height: 109px;
}
.call header {
    height: 42px;
    padding-left: 11px;
    background: radial-gradient(ellipse at 35% 60%, rgba(20, 40, 55, 0.8), transparent 45%), linear-gradient(100deg, #4a7596, #41708f 45%, #1b2c36);
    box-shadow: inset 0 1px 0 #75a5c8;
}
.destroy-a {
    left: 406px;
    top: 209px;
}
.destroy-b {
    left: 423px;
    top: 366px;
}
.death {
    left: 790px;
    top: 209px;
    width: 164px;
    height: 114px;
}
.death header {
    background: radial-gradient(ellipse at 35% 60%, rgba(20, 40, 55, 0.8), transparent 45%), linear-gradient(100deg, #4a7596, #41708f 50%, #6b7377);
}
.death .pins:last-child {
    height: 34px;
}
.self {
    margin-left: 5px;
    padding: 0 5px;
    font-size: 14px;
    line-height: 18px;
}

/* compiler results */
.results {
    height: 192px;
    padding-top: 6px;
}
.results .panel-tab {
    height: 29px;
}
.results .panel-body {
    display: flex;
    flex-direction: column;
    padding: 7px 8px 10px 7px;
}
.log {
    height: 103px;
    border-radius: 0 0 3px 3px;
    background: #222;
}
.clear {
    align-self: flex-end;
    margin: 10px 6px 0 0;
    color: #8a8a8a;
}
```
